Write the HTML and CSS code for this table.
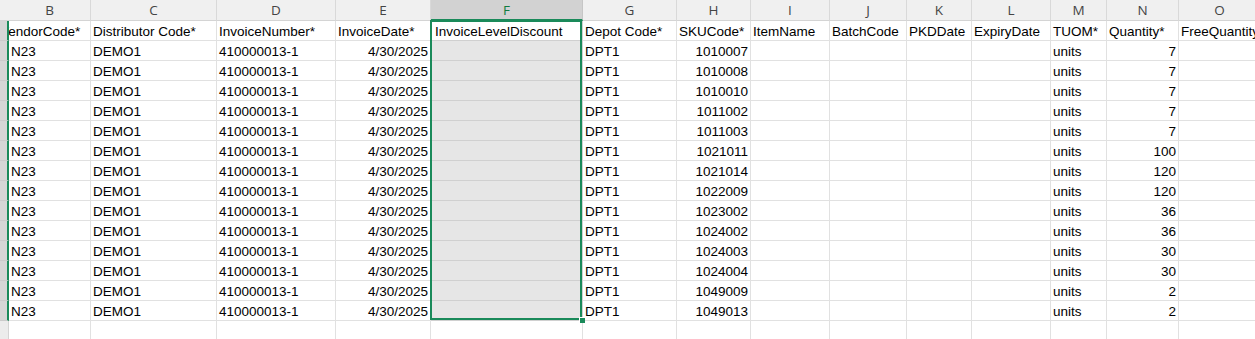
FILE: index.html
```html
<!DOCTYPE html>
<html>
<head>
  <meta charset="UTF-8">
  <title>Sheet</title>
  <link rel="stylesheet" href="styles.css">
</head>
<body>

  <div class="sheet">
    <!-- column letters -->
    <div class="col-hd corner"></div>
    <div class="col-hd">B</div>
    <div class="col-hd">C</div>
    <div class="col-hd">D</div>
    <div class="col-hd">E</div>
    <div class="col-hd col-hd--active">F</div>
    <div class="col-hd">G</div>
    <div class="col-hd">H</div>
    <div class="col-hd">I</div>
    <div class="col-hd">J</div>
    <div class="col-hd">K</div>
    <div class="col-hd">L</div>
    <div class="col-hd">M</div>
    <div class="col-hd">N</div>
    <div class="col-hd">O</div>

    <!-- row 1: titles -->
    <div class="row-hd"></div>
    <div class="cell"><span class="clip">VendorCode*</span></div>
    <div class="cell">Distributor Code*</div>
    <div class="cell">InvoiceNumber*</div>
    <div class="cell">InvoiceDate*</div>
    <div class="cell cell--f cell--top cell--active">InvoiceLevelDiscount</div>
    <div class="cell">Depot Code*</div>
    <div class="cell">SKUCode*</div>
    <div class="cell">ItemName</div>
    <div class="cell">BatchCode</div>
    <div class="cell">PKDDate</div>
    <div class="cell">ExpiryDate</div>
    <div class="cell">TUOM*</div>
    <div class="cell">Quantity*</div>
    <div class="cell">FreeQuantity</div>

    <div class="row-hd"></div><div class="cell">N23</div><div class="cell">DEMO1</div><div class="cell">410000013-1</div><div class="cell num">4/30/2025</div><div class="cell cell--f"></div><div class="cell">DPT1</div><div class="cell num">1010007</div><div class="cell"></div><div class="cell"></div><div class="cell"></div><div class="cell"></div><div class="cell">units</div><div class="cell num">7</div><div class="cell"></div>
    <div class="row-hd"></div><div class="cell">N23</div><div class="cell">DEMO1</div><div class="cell">410000013-1</div><div class="cell num">4/30/2025</div><div class="cell cell--f"></div><div class="cell">DPT1</div><div class="cell num">1010008</div><div class="cell"></div><div class="cell"></div><div class="cell"></div><div class="cell"></div><div class="cell">units</div><div class="cell num">7</div><div class="cell"></div>
    <div class="row-hd"></div><div class="cell">N23</div><div class="cell">DEMO1</div><div class="cell">410000013-1</div><div class="cell num">4/30/2025</div><div class="cell cell--f"></div><div class="cell">DPT1</div><div class="cell num">1010010</div><div class="cell"></div><div class="cell"></div><div class="cell"></div><div class="cell"></div><div class="cell">units</div><div class="cell num">7</div><div class="cell"></div>
    <div class="row-hd"></div><div class="cell">N23</div><div class="cell">DEMO1</div><div class="cell">410000013-1</div><div class="cell num">4/30/2025</div><div class="cell cell--f"></div><div class="cell">DPT1</div><div class="cell num">1011002</div><div class="cell"></div><div class="cell"></div><div class="cell"></div><div class="cell"></div><div class="cell">units</div><div class="cell num">7</div><div class="cell"></div>
    <div class="row-hd"></div><div class="cell">N23</div><div class="cell">DEMO1</div><div class="cell">410000013-1</div><div class="cell num">4/30/2025</div><div class="cell cell--f"></div><div class="cell">DPT1</div><div class="cell num">1011003</div><div class="cell"></div><div class="cell"></div><div class="cell"></div><div class="cell"></div><div class="cell">units</div><div class="cell num">7</div><div class="cell"></div>
    <div class="row-hd"></div><div class="cell">N23</div><div class="cell">DEMO1</div><div class="cell">410000013-1</div><div class="cell num">4/30/2025</div><div class="cell cell--f"></div><div class="cell">DPT1</div><div class="cell num">1021011</div><div class="cell"></div><div class="cell"></div><div class="cell"></div><div class="cell"></div><div class="cell">units</div><div class="cell num">100</div><div class="cell"></div>
    <div class="row-hd"></div><div class="cell">N23</div><div class="cell">DEMO1</div><div class="cell">410000013-1</div><div class="cell num">4/30/2025</div><div class="cell cell--f"></div><div class="cell">DPT1</div><div class="cell num">1021014</div><div class="cell"></div><div class="cell"></div><div class="cell"></div><div class="cell"></div><div class="cell">units</div><div class="cell num">120</div><div class="cell"></div>
    <div class="row-hd"></div><div class="cell">N23</div><div class="cell">DEMO1</div><div class="cell">410000013-1</div><div class="cell num">4/30/2025</div><div class="cell cell--f"></div><div class="cell">DPT1</div><div class="cell num">1022009</div><div class="cell"></div><div class="cell"></div><div class="cell"></div><div class="cell"></div><div class="cell">units</div><div class="cell num">120</div><div class="cell"></div>
    <div class="row-hd"></div><div class="cell">N23</div><div class="cell">DEMO1</div><div class="cell">410000013-1</div><div class="cell num">4/30/2025</div><div class="cell cell--f"></div><div class="cell">DPT1</div><div class="cell num">1023002</div><div class="cell"></div><div class="cell"></div><div class="cell"></div><div class="cell"></div><div class="cell">units</div><div class="cell num">36</div><div class="cell"></div>
    <div class="row-hd"></div><div class="cell">N23</div><div class="cell">DEMO1</div><div class="cell">410000013-1</div><div class="cell num">4/30/2025</div><div class="cell cell--f"></div><div class="cell">DPT1</div><div class="cell num">1024002</div><div class="cell"></div><div class="cell"></div><div class="cell"></div><div class="cell"></div><div class="cell">units</div><div class="cell num">36</div><div class="cell"></div>
    <div class="row-hd"></div><div class="cell">N23</div><div class="cell">DEMO1</div><div class="cell">410000013-1</div><div class="cell num">4/30/2025</div><div class="cell cell--f"></div><div class="cell">DPT1</div><div class="cell num">1024003</div><div class="cell"></div><div class="cell"></div><div class="cell"></div><div class="cell"></div><div class="cell">units</div><div class="cell num">30</div><div class="cell"></div>
    <div class="row-hd"></div><div class="cell">N23</div><div class="cell">DEMO1</div><div class="cell">410000013-1</div><div class="cell num">4/30/2025</div><div class="cell cell--f"></div><div class="cell">DPT1</div><div class="cell num">1024004</div><div class="cell"></div><div class="cell"></div><div class="cell"></div><div class="cell"></div><div class="cell">units</div><div class="cell num">30</div><div class="cell"></div>
    <div class="row-hd"></div><div class="cell">N23</div><div class="cell">DEMO1</div><div class="cell">410000013-1</div><div class="cell num">4/30/2025</div><div class="cell cell--f"></div><div class="cell">DPT1</div><div class="cell num">1049009</div><div class="cell"></div><div class="cell"></div><div class="cell"></div><div class="cell"></div><div class="cell">units</div><div class="cell num">2</div><div class="cell"></div>
    <div class="row-hd"></div><div class="cell">N23</div><div class="cell">DEMO1</div><div class="cell">410000013-1</div><div class="cell num">4/30/2025</div><div class="cell cell--f cell--bottom"><span class="fill-handle"></span></div><div class="cell">DPT1</div><div class="cell num">1049013</div><div class="cell"></div><div class="cell"></div><div class="cell"></div><div class="cell"></div><div class="cell">units</div><div class="cell num">2</div><div class="cell"></div>

    <!-- empty row below the data -->
    <div class="row-hd row-hd--idle"></div><div class="cell"></div><div class="cell"></div><div class="cell"></div><div class="cell"></div><div class="cell"></div><div class="cell"></div><div class="cell"></div><div class="cell"></div><div class="cell"></div><div class="cell"></div><div class="cell"></div><div class="cell"></div><div class="cell"></div><div class="cell"></div>
  </div>

</body>
</html>
```

FILE: styles.css
```css
body {
  margin: 0;
  overflow: hidden;
  background: #fff;
  font-family: "Liberation Sans", Arial, sans-serif;
  font-size: 13.5px;
  color: #000;
}

.sheet {
  display: grid;
  grid-template-columns: 9px 82px 126px 119px 95px 152px 94px 74px 79px 77px 65px 79px 56px 72px 82px;
  grid-template-rows: 21px;
  grid-auto-rows: 20px;
  width: 1261px;
}

.col-hd {
  box-sizing: border-box;
  background: #f0f0f0;
  border-right: 1px solid #d9d9d9;
  border-bottom: 1px solid #d4d4d4;
  font-family: "Open Sans", sans-serif;
  font-size: 13.5px;
  color: #444;
  text-align: center;
  line-height: 20px;
}

.corner {
  border-right: 0;
}

.col-hd--active {
  background: #d2d2d2;
  color: #107c41;
  border-bottom: 2px solid #1a8a5a;
  border-right-color: #c6c6c6;
}

.row-hd {
  box-sizing: border-box;
  background: #d6d6d6;
  border-right: 2px solid #1a8a5a;
  border-bottom: 1px solid #cbcbcb;
}

.row-hd--idle {
  background: #ececec;
  border-right: 1px solid #d4d4d4;
}

.cell {
  box-sizing: border-box;
  border-right: 1px solid #e1e1e1;
  border-bottom: 1px solid #e1e1e1;
  padding: 1px 3px 0 2px;
  line-height: 19px;
  white-space: nowrap;
  overflow: hidden;
}

.num {
  text-align: right;
  padding-right: 2px;
}

/* column B is scrolled, its first letter is out of view */
.clip {
  margin-left: -11px;
}

/* selected range F1:F15 */
.cell--f {
  position: relative;
  overflow: visible;
  background: #e6e6e6;
  border-right-color: #d0d0d0;
  border-bottom-color: #d0d0d0;
  padding-left: 4px;
}

.cell--f::after {
  content: "";
  position: absolute;
  top: 0;
  bottom: -1px;
  left: -1px;
  right: 0;
  border-left: 2px solid #1a8a5a;
  border-right: 2px solid #1a8a5a;
}

.cell--top::after {
  top: -1px;
  border-top: 2px solid #1a8a5a;
}

.cell--bottom::after {
  bottom: 0;
  border-bottom: 2px solid #1a8a5a;
}

.cell--active {
  background: #fff;
}

.fill-handle {
  position: absolute;
  z-index: 2;
  right: -3px;
  bottom: -3px;
  width: 5px;
  height: 5px;
  background: #1a8a5a;
  border-left: 1px solid #fff;
  border-top: 1px solid #fff;
}
```
